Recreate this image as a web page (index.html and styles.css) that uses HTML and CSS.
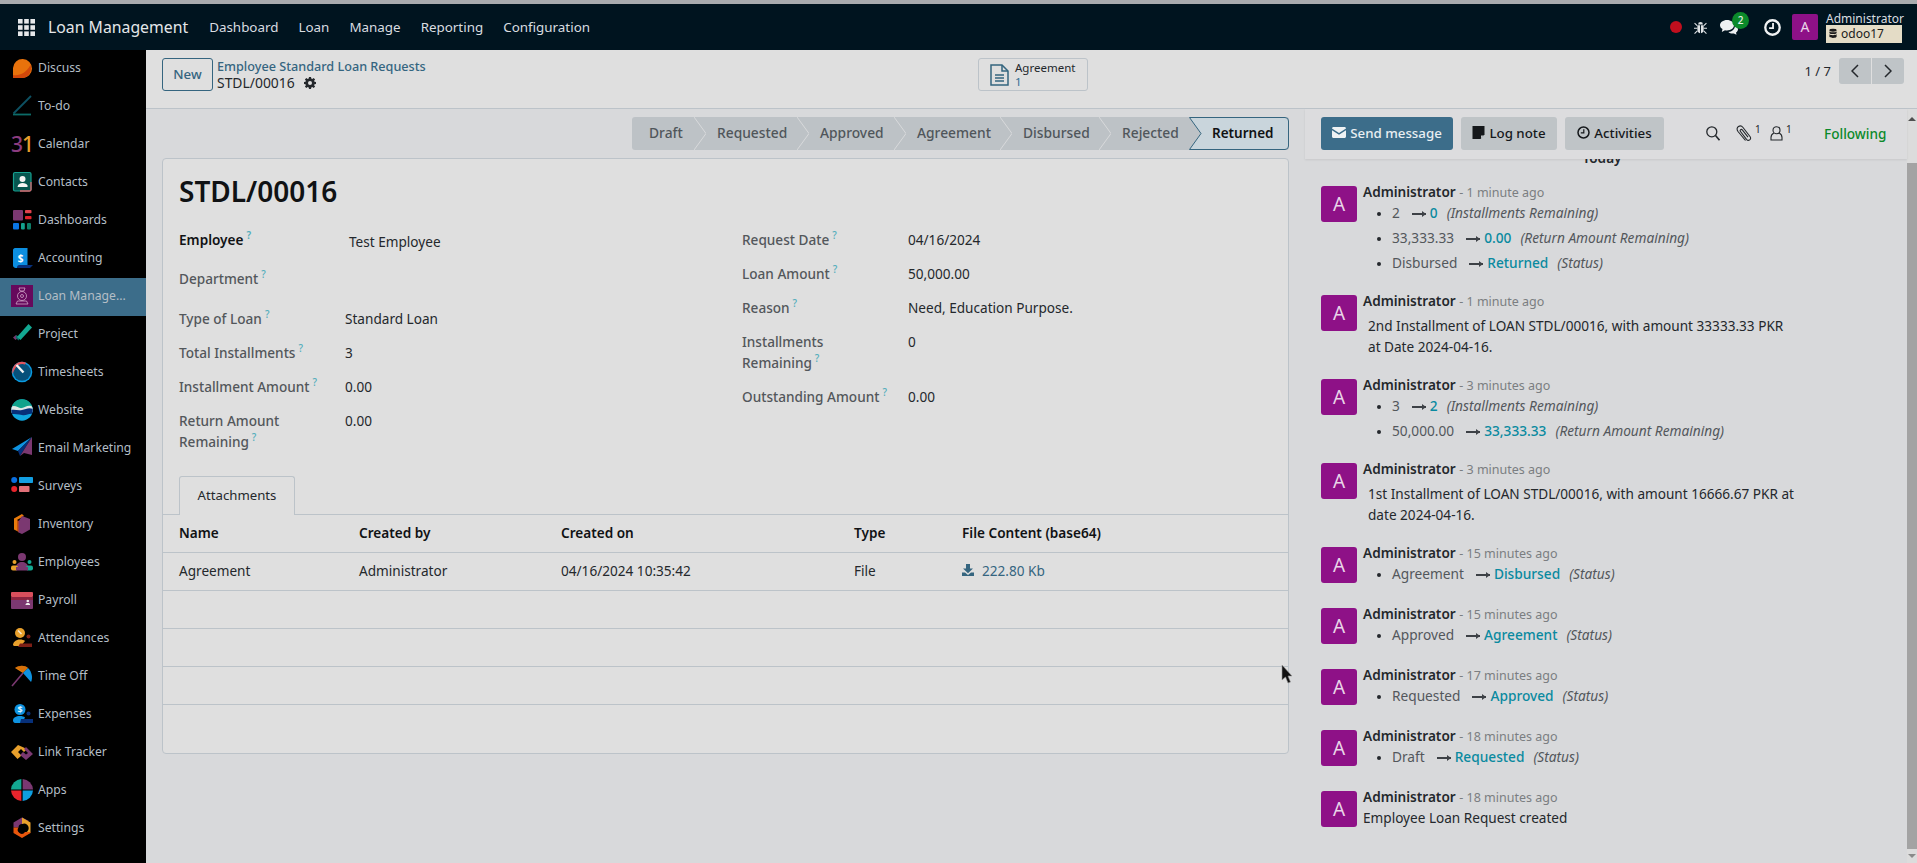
FILE: index.html
```html
<!DOCTYPE html>
<html lang="en">
<head>
    <meta charset="UTF-8">
    <title>STDL/00016 - Loan Management</title>
    <link rel="stylesheet" href="styles.css">
</head>
<body>
    <!-- top navbar -->
    <header class="navbar">
        <svg class="grid-icon" viewBox="0 0 17 17" fill="#e6e8ea">
            <rect width="4.6" height="4.6"/><rect x="6.2" width="4.6" height="4.6"/><rect x="12.4" width="4.6" height="4.6"/>
            <rect y="6.2" width="4.6" height="4.6"/><rect x="6.2" y="6.2" width="4.6" height="4.6"/><rect x="12.4" y="6.2" width="4.6" height="4.6"/>
            <rect y="12.4" width="4.6" height="4.6"/><rect x="6.2" y="12.4" width="4.6" height="4.6"/><rect x="12.4" y="12.4" width="4.6" height="4.6"/>
        </svg>
        <span class="brand">Loan Management</span>
        <nav class="menu">
            <a>Dashboard</a>
            <a>Loan</a>
            <a>Manage</a>
            <a>Reporting</a>
            <a>Configuration</a>
        </nav>
        <div class="systray">
            <span class="rec-dot"></span>
            <svg class="tray-bug" viewBox="0 0 14 15" fill="#dfe3e6">
                <path d="M4.4 4.2a2.6 2.6 0 0 1 5.2 0z"/>
                <path d="M3.6 5h2.9v8.6A3.6 3.6 0 0 1 3.6 10zM7.5 5h2.9v5a3.6 3.6 0 0 1-2.9 3.6z"/>
                <path d="M.6 2.8 3.4 5.4 M13.4 2.8 10.6 5.4 M0 8.3h3.6 M14 8.3h-3.6 M.6 14l3-2.8 M13.4 14l-3-2.8" stroke="#dfe3e6" stroke-width="1.2" fill="none"/>
            </svg>
            <span class="tray-chat">
                <svg viewBox="0 0 18 15" fill="#eef0f2">
                    <path d="M7 0c3.9 0 7 2.3 7 5.2s-3.1 5.2-7 5.2c-.7 0-1.4-.1-2-.2L1.800 12l.7-2.900C.9 8.100 0 6.700 0 5.200 0 2.300 3.100 0 7 0z"/>
                    <path d="M15 5.500c1.800.8 3 2.200 3 3.800 0 1.300-.8 2.500-2 3.300l.5 2.200-2.600-1.400c-2.200.3-4.300-.3-5.500-1.500 3.600-.1 6.700-2.700 6.600-6.400z"/>
                </svg>
                <b class="tray-badge">2</b>
            </span>
            <svg class="tray-clock" viewBox="0 0 16 16" fill="none" stroke="#f0f2f3" stroke-width="2.200">
                <circle cx="8" cy="8" r="6.800"/><path d="M8.500 3.800V8.500H4.800" stroke-width="1.700"/>
            </svg>
            <span class="user-avatar">A</span>
            <div class="user-block">
                <span class="user-name">Administrator</span>
                <span class="db-badge">
                    <svg viewBox="0 0 10 12" fill="#1b1b1b"><ellipse cx="5" cy="2" rx="4.500" ry="1.800"/><path d="M.5 3.500c1 1.400 8 1.400 9 0V5.600c-1 1.400-8 1.400-9 0zM.5 7c1 1.400 8 1.400 9 0v3c-1 2-8 2-9 0z"/></svg>
                    odoo17
                </span>
            </div>
        </div>
    </header>

    <div class="layout">
        <!-- apps sidebar -->
        <aside class="sidebar">
            <a class="app">
                <svg viewBox="0 0 22 22"><path fill="#e8720c" d="M2 21V11a9.500 9.500 0 1 1 9.500 10z"/><path fill="#d2480a" d="M2 21v-3c7 1 13-2 17.500-10 2 6-2 13-8 13z"/></svg>
                <span>Discuss</span>
            </a>
            <a class="app">
                <svg viewBox="0 0 22 22" fill="none" stroke-width="1.800"><path stroke="#0d5163" d="M20 1 2.500 18.500"/><path stroke="#0c6b68" d="M2 19.500h18"/></svg>
                <span>To-do</span>
            </a>
            <a class="app">
                <span class="app-cal"><i class="cal-three">3</i><i class="cal-one">1</i></span>
                <span>Calendar</span>
            </a>
            <a class="app">
                <svg viewBox="0 0 22 22"><rect x="2.500" y="1.500" width="17.500" height="18.500" rx="1.500" fill="#06554f" stroke="#17a08f" stroke-width="1.200"/><path d="M20 11v7.500a1.500 1.500 0 0 1-1.500 1.500H9" fill="none" stroke="#d9626a" stroke-width="1.300"/><circle cx="11.500" cy="8" r="3" fill="#f4f4f4"/><path d="M6.500 16c.5-3 2.500-4 5-4s4.500 1 5 2.500v1.500z" fill="#f4f4f4"/></svg>
                <span>Contacts</span>
            </a>
            <a class="app">
                <svg viewBox="0 0 22 22"><rect x="2" y="1" width="10" height="10.500" rx="1" fill="#7b3871"/><rect x="14" y="1" width="6.500" height="3.300" rx=".8" fill="#e0424e"/><rect x="14" y="7" width="6.500" height="3.300" rx=".8" fill="#e0242c"/><rect x="2" y="14" width="6" height="6.500" rx="1" fill="#0a75e4"/><rect x="10" y="14" width="3.800" height="6.500" rx="1" fill="#13a08d"/><rect x="16" y="14" width="4" height="6.500" rx="1" fill="#0d7d68"/></svg>
                <span>Dashboards</span>
            </a>
            <a class="app">
                <svg viewBox="0 0 22 22"><path fill="#07307a" d="M6 18h16l-3 3H6z"/><path fill="#0c8ee0" d="M4 1h12.500v17H8c-2 0-2 3-2 3-2 0-4-.5-4-2.500V3c0-1 1-2 2-2z"/><text class="acc-dollar" x="9.500" y="14.500" text-anchor="middle">$</text></svg>
                <span>Accounting</span>
            </a>
            <a class="app app-active">
                <svg viewBox="0 0 22 22"><rect width="22" height="22" fill="#66095c"/><g fill="none" stroke="#cfa6c8" stroke-width=".8"><path d="M8 3h6l-1 3h-4z"/><circle cx="11" cy="11" r="4.500"/><circle cx="11" cy="11" r="1.500"/><path d="M6.500 16h9l1.500 3H5z"/></g></svg>
                <span>Loan Manage...</span>
            </a>
            <a class="app">
                <svg viewBox="0 0 22 22"><path fill="#7b3871" d="M2 14.500l3-2.500 2.500 2.500-3 2.500z"/><path fill="#0c6b68" d="M5.500 12 9 15l-1.500 2.500-3-3z"/><path fill="#13a892" d="M17.500 1 21 4.500 9.500 17l-3.500-3z"/></svg>
                <span>Project</span>
            </a>
            <a class="app">
                <svg viewBox="0 0 22 22"><circle cx="11" cy="11" r="10.300" fill="#0a9ae0"/><circle cx="11" cy="11" r="8.800" fill="#07507a"/><path d="M1.500 13A10 10 0 0 1 11 .7 10 10 0 0 1 15 1.800L14 3.500A8.800 8.800 0 0 0 3 9.500z" fill="#e0545c"/><path d="M5.500 4 12.500 11.500" stroke="#f4f4f4" stroke-width="2.400"/></svg>
                <span>Timesheets</span>
            </a>
            <a class="app">
                <svg viewBox="0 0 22 22"><defs><clipPath id="webClip"><circle cx="11" cy="11" r="10.700"/></clipPath></defs><g clip-path="url(#webClip)"><rect width="22" height="22" fill="#10a6e0"/><rect width="22" height="9" fill="#10a38c"/><path d="M0 8c4-3 8 2 11 1s7-4 11-1v5c-4-2-7 1-11 1s-7-2-11 0z" fill="#dfe8e6"/><path d="M0 11c4-1 7 1 11 0s7-3 11-1v5c-4-1-7 2-11 1S4 15 0 15z" fill="#07307a"/></g></svg>
                <span>Website</span>
            </a>
            <a class="app">
                <svg viewBox="0 0 22 22"><path fill="#0e92e0" d="M21 0 1 12l6 2z"/><path fill="#07307a" d="M21 0 7 14l2 5z"/><path fill="#7b3871" d="M21 0v18l-8-2-4 3z"/></svg>
                <span>Email Marketing</span>
            </a>
            <a class="app">
                <svg viewBox="0 0 22 22"><circle cx="3.200" cy="5" r="3" fill="#0a6fe0"/><circle cx="3.200" cy="14" r="3" fill="#e8242c"/><rect x="8" y="2" width="14" height="6" rx=".8" fill="#129fe2"/><rect x="8" y="11" width="10.500" height="6" rx=".8" fill="#e07078"/></svg>
                <span>Surveys</span>
            </a>
            <a class="app">
                <svg viewBox="0 0 22 22"><path fill="#e87b0c" d="M11 1 3 5.500v11L6 18V7l7-4z"/><path fill="#c94e0a" d="M6 7v11l2 1.500V8z"/><path fill="#7b3871" d="M19 6 11 3 7.500 8.500v11L11 21l8-4.500z"/></svg>
                <span>Inventory</span>
            </a>
            <a class="app">
                <svg viewBox="0 0 22 22"><circle cx="11" cy="6" r="4" fill="#7b3871"/><path d="M5 16c0-3 3-5 6-5s6 2 6 5z" fill="#7b3871"/><circle cx="3.500" cy="11" r="2" fill="#e8a02c"/><circle cx="18.500" cy="11" r="2" fill="#13a892"/><rect y="14.500" width="7" height="5" rx="2" fill="#e8a02c"/><rect x="15" y="14.500" width="7" height="5" rx="2" fill="#13a892"/><rect x="5" y="16" width="12" height="3.500" fill="#7b3871"/></svg>
                <span>Employees</span>
            </a>
            <a class="app">
                <svg viewBox="0 0 22 22"><rect y="3" width="22" height="5" rx="1" fill="#d94f5c"/><rect y="8" width="22" height="3" fill="#8c2440"/><path d="M0 11h22v8a1 1 0 0 1-1 1H1a1 1 0 0 1-1-1z" fill="#7b3871"/><circle cx="16.800" cy="12" r="1.300" fill="#eee"/><path d="M14.500 16c0-1.500 1-2 2.300-2s2.300.5 2.300 2z" fill="#eee"/></svg>
                <span>Payroll</span>
            </a>
            <a class="app">
                <svg viewBox="0 0 22 22"><circle cx="9" cy="6" r="5" fill="#e8a02c"/><path d="M7 3.500l3.500 3.500" stroke="#f6e7d0" stroke-width="1.600"/><path d="M2 18c0-3 3-5.500 7-5.500 2 0 4 .5 5 1.500l-4 5H4c-1 0-2-.5-2-1z" fill="#e8a02c"/><circle cx="17.500" cy="9.500" r="2" fill="#7c1f16"/><path d="M9 16.500h12V20H7z" fill="#7c1f16"/></svg>
                <span>Attendances</span>
            </a>
            <a class="app">
                <svg viewBox="0 0 22 22"><path d="M1 21 12 8" stroke="#7b3871" stroke-width="1.600"/><path fill="#e8820c" d="M4 3c4-3 10-3 13 0l-5 5z"/><path fill="#b8570a" d="M4 3c2 0 5 1 8 5L17 3c-4-3-9-3-13 0z" opacity=".4"/><path fill="#0e92e0" d="M17 3c4 4 5 10 3 14L12 8z"/></svg>
                <span>Time Off</span>
            </a>
            <a class="app">
                <svg viewBox="0 0 22 22"><circle cx="9" cy="6.500" r="5.500" fill="#0e92e0"/><text class="exp-dollar" x="9" y="9.500" text-anchor="middle">$</text><path d="M2 17.500c0-3 3-4.500 7-4.500 2 0 4 .5 5 1.500l-3 5.500H4c-1 0-2-1-2-2.500z" fill="#0e92e0"/><circle cx="17.500" cy="10.500" r="2" fill="#07307a"/><path d="M10 16h12v4H9z" fill="#07307a"/></svg>
                <span>Expenses</span>
            </a>
            <a class="app">
                <svg viewBox="0 0 22 22"><path fill="#e8a02c" d="M7 4 0 11l6.500 7 4-3.500-3.500-3.500 3-3 3 3 3-3z"/><path fill="#7b3871" d="M15 6l7 7-7 6-6-5 3-3 3 2.500 2-1.500-4-4z"/></svg>
                <span>Link Tracker</span>
            </a>
            <a class="app">
                <svg viewBox="0 0 22 22"><path fill="#13a892" d="M10.400 0A11 11 0 0 0 0 10.400h10.400z"/><path fill="#7b3871" d="M11.600 0A11 11 0 0 1 22 10.400H11.600z"/><path fill="#e8242c" d="M0 11.600A11 11 0 0 0 10.400 22V11.600z"/><path fill="#0e9ee0" d="M22 11.600A11 11 0 0 1 11.600 22V11.600z"/></svg>
                <span>Apps</span>
            </a>
            <a class="app">
                <svg viewBox="0 0 22 22"><path fill="#7b3871" d="M11 .5 2.500 5.500v5h5a3.500 3.500 0 0 1 3.500-3.500l7-3z"/><path fill="#e8a02c" d="M19.500 5.500v10l-4.500 0a4 4 0 0 0-4-8.500l0-6.500z"/><path fill="#e8560c" d="M2.500 10.500v5.500l8.500 5 8.500-5v-1H14a3.500 3.500 0 0 1-6.500-4.500z"/></svg>
                <span>Settings</span>
            </a>
        </aside>

        <main class="main">
            <!-- control panel -->
            <div class="control-panel">
                <button class="btn-new">New</button>
                <div class="breadcrumb">
                    <a class="crumb-link">Employee Standard Loan Requests</a>
                    <div class="crumb-current">
                        STDL/00016
                        <svg class="gear" viewBox="0 0 12 12" fill="#24282c"><path fill-rule="evenodd" d="M5 0h2l.3 1.600 1 .4L9.700 1l1.400 1.400-1 1.400.4 1 1.500.2v2l-1.500.3-.4 1 1 1.300-1.400 1.400-1.400-1-1 .4L7 12H5l-.3-1.600-1-.4L2.300 11 .9 9.600l1-1.300-.4-1L0 7V5l1.500-.2.400-1-1-1.400L2.300 1l1.400 1 1-.4zM6 4a2 2 0 1 0 0 4 2 2 0 0 0 0-4z"/></svg>
                    </div>
                </div>
                <a class="stat-btn">
                    <svg viewBox="0 0 19 22" fill="none" stroke="#35657f" stroke-width="1.500">
                        <path d="M1 1h11l6 6v14H1z"/><path d="M12 1v6h6M5 11h9M5 14h9M5 17h9"/>
                    </svg>
                    <span class="stat-text">Agreement<b>1</b></span>
                </a>
                <div class="pager">
                    <span class="pager-count">1 / 7</span>
                    <div class="pager-btns">
                        <button><svg viewBox="0 0 8 14" fill="none" stroke="#24282c" stroke-width="1.500"><path d="M7 1 1 7l6 6"/></svg></button>
                        <button><svg viewBox="0 0 8 14" fill="none" stroke="#24282c" stroke-width="1.500"><path d="M1 1l6 6-6 6"/></svg></button>
                    </div>
                </div>
            </div>

            <div class="content">
                <!-- form -->
                <section class="form-col">
                    <div class="statusbar">
                        <div class="step step-first">Draft<svg class="chev" viewBox="0 0 12 33"><path d="M0 0 12 16.500 0 33"/></svg></div>
                        <div class="step">Requested<svg class="chev" viewBox="0 0 12 33"><path d="M0 0 12 16.500 0 33"/></svg></div>
                        <div class="step">Approved<svg class="chev" viewBox="0 0 12 33"><path d="M0 0 12 16.500 0 33"/></svg></div>
                        <div class="step">Agreement<svg class="chev" viewBox="0 0 12 33"><path d="M0 0 12 16.500 0 33"/></svg></div>
                        <div class="step">Disbursed<svg class="chev" viewBox="0 0 12 33"><path d="M0 0 12 16.500 0 33"/></svg></div>
                        <div class="step">Rejected</div>
                        <div class="step step-current">
                            <svg class="step-bg" viewBox="0 0 100 33"><path d="M.5.500H96a3.500 3.500 0 0 1 3.500 3.500V29a3.500 3.500 0 0 1-3.500 3.500H.5L12 16.500z"/></svg>
                            <span>Returned</span>
                        </div>
                    </div>

                    <div class="sheet">
                        <h1 class="sheet-title">STDL/00016</h1>
                        <div class="groups">
                            <div class="group">
                                <div class="field field-first"><div class="field-label label-strong">Employee<sup>?</sup></div><div class="field-value value-indent">Test Employee</div></div>
                                <div class="field field-dept"><div class="field-label">Department<sup>?</sup></div><div class="field-value"></div></div>
                                <div class="field"><div class="field-label">Type of Loan<sup>?</sup></div><div class="field-value">Standard Loan</div></div>
                                <div class="field"><div class="field-label">Total Installments<sup>?</sup></div><div class="field-value">3</div></div>
                                <div class="field"><div class="field-label">Installment Amount<sup>?</sup></div><div class="field-value">0.00</div></div>
                                <div class="field"><div class="field-label">Return Amount<br>Remaining<sup>?</sup></div><div class="field-value">0.00</div></div>
                            </div>
                            <div class="group">
                                <div class="field"><div class="field-label">Request Date<sup>?</sup></div><div class="field-value">04/16/2024</div></div>
                                <div class="field"><div class="field-label">Loan Amount<sup>?</sup></div><div class="field-value">50,000.00</div></div>
                                <div class="field"><div class="field-label">Reason<sup>?</sup></div><div class="field-value">Need, Education Purpose.</div></div>
                                <div class="field"><div class="field-label">Installments<br>Remaining<sup>?</sup></div><div class="field-value">0</div></div>
                                <div class="field"><div class="field-label">Outstanding Amount<sup>?</sup></div><div class="field-value">0.00</div></div>
                            </div>
                        </div>

                        <div class="tabs"><a class="tab">Attachments</a></div>
                        <table class="attach-table">
                            <thead>
                                <tr><th class="col-name">Name</th><th class="col-by">Created by</th><th class="col-on">Created on</th><th class="col-type">Type</th><th>File Content (base64)</th></tr>
                            </thead>
                            <tbody>
                                <tr>
                                    <td>Agreement</td><td>Administrator</td><td>04/16/2024 10:35:42</td><td>File</td>
                                    <td><a class="file-link"><svg viewBox="0 0 12 12" fill="#35657f"><path d="M4 0h4v4.500h3L6 9.200 1 4.500h3z"/><path d="M0 8.500h3L6 11l3-2.500h3V12H0z"/></svg>222.80 Kb</a></td>
                                </tr>
                                <tr><td colspan="5"></td></tr>
                                <tr><td colspan="5"></td></tr>
                                <tr><td colspan="5"></td></tr>
                                <tr class="row-last"><td colspan="5"></td></tr>
                            </tbody>
                        </table>
                    </div>
                </section>

                <!-- chatter -->
                <section class="chatter">
                    <div class="chatter-scroll">
                        <div class="chatter-bar">
                            <button class="chat-btn chat-btn-primary">
                                <svg viewBox="0 0 14 11" fill="#eef2f4"><path d="M0 1.500C0 .7.700 0 1.500 0h11c.8 0 1.500.7 1.500 1.500L7 6zM0 3.200 7 7.800l7-4.600v6.300c0 .8-.7 1.500-1.500 1.500h-11C.7 11 0 10.300 0 9.500z"/></svg>
                                Send message
                            </button>
                            <button class="chat-btn">
                                <svg viewBox="0 0 12 13" fill="#15181b"><path d="M0 0h12v8.500L8 13H0z"/><path d="M8.500 9.500h3l-3 3z" fill="#bfc4c7"/></svg>
                                Log note
                            </button>
                            <button class="chat-btn">
                                <svg viewBox="0 0 13 13" fill="none" stroke="#15181b" stroke-width="1.500"><circle cx="6.500" cy="6.500" r="5.500"/><path d="M6.800 3.200v3.600H3.800" stroke-width="1.200"/></svg>
                                Activities
                            </button>
                            <div class="chat-tools">
                                <svg class="tool-search" viewBox="0 0 14 15" fill="none" stroke="#24282c" stroke-width="1.300"><circle cx="5.800" cy="5.800" r="5"/><path d="M9.500 9.500 13.500 14.200" stroke-width="1.600"/></svg>
                                <svg class="tool-clip" viewBox="0 0 16 17" fill="none" stroke="#24282c" stroke-width="1.100"><path d="M9.500 15.500 2 6.500C.5 4.500 1 2.500 2.500 1.500s3.300-.6 4.500 1l7 9c1 1.400.7 2.700-.3 3.400s-2.300.5-3.200-.6L4.500 6.500c-.6-.8-.4-1.500.2-1.900s1.200-.2 1.800.5l5.500 7"/></svg>
                                <sup class="tool-count">1</sup>
                                <svg class="tool-user" viewBox="0 0 13 15" fill="none" stroke="#24282c" stroke-width="1.100"><circle cx="6.500" cy="4.200" r="3.500"/><path d="M3.800 7C2 8 1 9.500 1 11.500V14h11v-2.500C12 9.500 11 8 9.200 7"/></svg>
                                <sup class="tool-count">1</sup>
                            </div>
                            <span class="following">Following</span>
                        </div>

                        <div class="today">Today</div>

                        <div class="msg">
                            <span class="msg-avatar">A</span>
                            <div class="msg-body">
                                <div class="msg-head"><b>Administrator</b> <span>- 1 minute ago</span></div>
                                <ul class="changes">
                                    <li><span class="old">2</span><i class="arrow"></i><span class="new">0</span><em>(Installments Remaining)</em></li>
                                    <li><span class="old">33,333.33</span><i class="arrow"></i><span class="new">0.00</span><em>(Return Amount Remaining)</em></li>
                                    <li><span class="old">Disbursed</span><i class="arrow"></i><span class="new">Returned</span><em>(Status)</em></li>
                                </ul>
                            </div>
                        </div>
                        <div class="msg">
                            <span class="msg-avatar">A</span>
                            <div class="msg-body">
                                <div class="msg-head"><b>Administrator</b> <span>- 1 minute ago</span></div>
                                <p class="msg-note">2nd Installment of LOAN STDL/00016, with amount 33333.33 PKR<br>at Date 2024-04-16.</p>
                            </div>
                        </div>
                        <div class="msg">
                            <span class="msg-avatar">A</span>
                            <div class="msg-body">
                                <div class="msg-head"><b>Administrator</b> <span>- 3 minutes ago</span></div>
                                <ul class="changes">
                                    <li><span class="old">3</span><i class="arrow"></i><span class="new">2</span><em>(Installments Remaining)</em></li>
                                    <li><span class="old">50,000.00</span><i class="arrow"></i><span class="new">33,333.33</span><em>(Return Amount Remaining)</em></li>
                                </ul>
                            </div>
                        </div>
                        <div class="msg">
                            <span class="msg-avatar">A</span>
                            <div class="msg-body">
                                <div class="msg-head"><b>Administrator</b> <span>- 3 minutes ago</span></div>
                                <p class="msg-note">1st Installment of LOAN STDL/00016, with amount 16666.67 PKR at<br>date 2024-04-16.</p>
                            </div>
                        </div>
                        <div class="msg">
                            <span class="msg-avatar">A</span>
                            <div class="msg-body">
                                <div class="msg-head"><b>Administrator</b> <span>- 15 minutes ago</span></div>
                                <ul class="changes">
                                    <li><span class="old">Agreement</span><i class="arrow"></i><span class="new">Disbursed</span><em>(Status)</em></li>
                                </ul>
                            </div>
                        </div>
                        <div class="msg">
                            <span class="msg-avatar">A</span>
                            <div class="msg-body">
                                <div class="msg-head"><b>Administrator</b> <span>- 15 minutes ago</span></div>
                                <ul class="changes">
                                    <li><span class="old">Approved</span><i class="arrow"></i><span class="new">Agreement</span><em>(Status)</em></li>
                                </ul>
                            </div>
                        </div>
                        <div class="msg">
                            <span class="msg-avatar">A</span>
                            <div class="msg-body">
                                <div class="msg-head"><b>Administrator</b> <span>- 17 minutes ago</span></div>
                                <ul class="changes">
                                    <li><span class="old">Requested</span><i class="arrow"></i><span class="new">Approved</span><em>(Status)</em></li>
                                </ul>
                            </div>
                        </div>
                        <div class="msg">
                            <span class="msg-avatar">A</span>
                            <div class="msg-body">
                                <div class="msg-head"><b>Administrator</b> <span>- 18 minutes ago</span></div>
                                <ul class="changes">
                                    <li><span class="old">Draft</span><i class="arrow"></i><span class="new">Requested</span><em>(Status)</em></li>
                                </ul>
                            </div>
                        </div>
                        <div class="msg">
                            <span class="msg-avatar">A</span>
                            <div class="msg-body">
                                <div class="msg-head"><b>Administrator</b> <span>- 18 minutes ago</span></div>
                                <div class="msg-plain">Employee Loan Request created</div>
                            </div>
                        </div>
                    </div>
                    <div class="scrollbar">
                        <span class="scroll-up"></span>
                        <span class="scroll-thumb"></span>
                        <span class="scroll-down"></span>
                    </div>
                </section>
            </div>
        </main>
    </div>

    <!-- mouse pointer caught in the screenshot -->
    <svg class="cursor" viewBox="0 0 12 19"><path d="M1 0v15l3.500-3 2.500 6 2.500-1-2.500-6H11z" fill="#111" stroke="#999" stroke-width=".6"/></svg>
</body>
</html>
```

FILE: styles.css
```css
* {
    box-sizing: border-box;
}
html, body {
    height: 100%;
}
body {
    margin: 0;
    overflow: hidden;
    display: flex;
    flex-direction: column;
    border-top: 4px solid #a9abae;
    background-color: #d8d9db;
    color: #24282c;
    font-family: "Noto Sans", sans-serif;
    font-size: 13.6px;
    line-height: 21px;
}
button {
    font-family: inherit;
    cursor: pointer;
}
a {
    cursor: pointer;
}

/* navbar */
.navbar {
    flex: none;
    height: 46px;
    display: flex;
    align-items: center;
    padding-left: 18px;
    background-color: #00141f;
    color: #d9dde0;
}
.grid-icon {
    width: 17px;
    height: 17px;
}
.brand {
    margin-left: 13px;
    font-size: 15.8px;
    color: #e4e7e9;
}
.menu {
    display: flex;
    margin-left: 21px;
    gap: 20px;
    font-size: 13.4px;
}
.systray {
    margin-left: auto;
    display: flex;
    align-items: center;
    padding-right: 15px;
}
.rec-dot {
    width: 12px;
    height: 12px;
    margin-right: 12px;
    border-radius: 50%;
    background-color: #c00f1e;
}
.tray-bug {
    width: 13px;
    height: 15px;
    margin-right: 13px;
}
.tray-chat {
    position: relative;
    width: 18px;
    height: 15px;
    margin-right: 26px;
}
.tray-chat svg {
    display: block;
    width: 18px;
    height: 15px;
}
.tray-badge {
    position: absolute;
    left: 12px;
    top: -8px;
    width: 17px;
    height: 17px;
    border-radius: 50%;
    background-color: #0b8a2a;
    color: #e8f0ea;
    font-size: 10px;
    font-weight: 500;
    line-height: 17px;
    text-align: center;
}
.tray-clock {
    width: 17px;
    height: 17px;
    margin-right: 11px;
}
.user-avatar {
    width: 26px;
    height: 26px;
    border-radius: 2px;
    background-color: #8e1187;
    color: #e9d5e8;
    font-size: 14px;
    line-height: 26px;
    text-align: center;
}
.user-block {
    width: 76px;
    margin-left: 8px;
    display: flex;
    flex-direction: column;
}
.user-name {
    font-size: 12px;
    line-height: 13px;
    white-space: nowrap;
}
.db-badge {
    height: 18px;
    display: flex;
    align-items: center;
    gap: 4px;
    padding-left: 3px;
    background-color: #e4dcc6;
    color: #1b1b1b;
    font-size: 12px;
    line-height: 18px;
}
.db-badge svg {
    width: 8px;
    height: 11px;
}

/* layout */
.layout {
    flex: 1;
    min-height: 0;
    display: flex;
}
.sidebar {
    flex: none;
    width: 146px;
    background-color: #000;
}
.app {
    height: 38px;
    display: flex;
    align-items: center;
    gap: 5px;
    padding-left: 11px;
    padding-bottom: 3px;
    color: #b4bec6;
    font-size: 12.200px;
    white-space: nowrap;
}
.app svg {
    flex: none;
    width: 22px;
    height: 22px;
}
.app-active {
    background-color: #3c6d8a;
}
.app-cal {
    flex: none;
    width: 22px;
    font-size: 21px;
    font-weight: 500;
    line-height: 22px;
    letter-spacing: -1px;
}
.app-cal i {
    font-style: normal;
}
.cal-three {
    color: #8c3c80;
}
.cal-one {
    color: #e8a02c;
}
.acc-dollar {
    font-size: 10px;
    font-weight: 700;
    fill: #fff;
}
.exp-dollar {
    font-size: 9px;
    font-weight: 700;
    fill: #dff1fb;
}
.main {
    flex: 1;
    min-width: 0;
    display: flex;
    flex-direction: column;
}

/* control panel */
.control-panel {
    flex: none;
    position: relative;
    height: 59px;
    display: flex;
    align-items: flex-start;
    padding: 8px 13px 0 16px;
    background-color: #dfdfdf;
    border-bottom: 1px solid #bcc3c9;
}
.btn-new {
    width: 51px;
    height: 33px;
    padding: 0 0 2px;
    border: 1px solid #35657f;
    border-radius: 3px;
    background: transparent;
    color: #35657f;
    font-size: 13.3px;
    font-weight: 500;
}
.breadcrumb {
    margin-left: 4px;
    line-height: 17px;
}
.crumb-link {
    display: block;
    color: #35657f;
    font-size: 12.650px;
    font-weight: 500;
    line-height: 17px;
    white-space: nowrap;
}
.crumb-current {
    display: flex;
    align-items: center;
    gap: 9px;
    font-size: 13.900px;
    line-height: 16px;
}
.gear {
    width: 12px;
    height: 12px;
}
.stat-btn {
    position: absolute;
    left: 832px;
    top: 8px;
    width: 110px;
    height: 33px;
    display: flex;
    align-items: center;
    gap: 6px;
    padding-left: 11px;
    border: 1px solid #bcc3c9;
    border-radius: 3px;
}
.stat-btn svg {
    width: 19px;
    height: 22px;
}
.stat-text {
    font-size: 11.500px;
    line-height: 14px;
}
.stat-text b {
    display: block;
    color: #2f6d94;
    font-weight: 400;
}
.pager {
    margin-left: auto;
    display: flex;
    align-items: center;
    gap: 8px;
}
.pager-count {
    font-size: 13px;
}
.pager-btns {
    display: flex;
    gap: 1px;
}
.pager-btns button {
    width: 32px;
    height: 26px;
    display: flex;
    align-items: center;
    justify-content: center;
    padding: 0;
    border: none;
    background-color: #bfc4c7;
}
.pager-btns button:first-child {
    border-radius: 3px 0 0 3px;
}
.pager-btns button:last-child {
    border-radius: 0 3px 3px 0;
}
.pager-btns svg {
    width: 8px;
    height: 14px;
}

/* form */
.content {
    flex: 1;
    min-height: 0;
    display: flex;
}
.form-col {
    flex: none;
    width: 1159px;
    padding: 8px 16px 0;
}
.statusbar {
    width: 657px;
    height: 33px;
    margin-left: auto;
    display: grid;
    grid-template-columns: 62px 103px 97px 106px 99px 90px 100px;
    border-radius: 3px;
    background-color: #bdc2c6;
    color: #50565b;
    font-size: 13.8px;
    font-weight: 500;
    line-height: 32px;
}
.step {
    position: relative;
    padding-left: 23px;
    white-space: nowrap;
}
.step-first {
    padding-left: 17px;
}
.chev {
    position: absolute;
    left: 100%;
    top: 0;
    width: 12px;
    height: 33px;
    fill: none;
    stroke: #d8d9db;
    stroke-width: 1;
}
.step-current {
    color: #101214;
    font-weight: 600;
    font-size: 13.5px;
}
.step-current span {
    position: relative;
}
.step-bg {
    position: absolute;
    left: 0;
    top: 0;
    width: 100px;
    height: 33px;
    fill: #c9d5dc;
    stroke: #35657f;
    stroke-width: 1;
}
.sheet {
    height: 596px;
    margin-top: 8px;
    border: 1px solid #bcc3c9;
    border-radius: 4px;
    background-color: #dfdfdf;
    overflow: hidden;
}
.sheet-title {
    margin: 13px 16px 19px;
    color: #101214;
    font-size: 28px;
    font-weight: 600;
    line-height: 38px;
}
.groups {
    display: grid;
    grid-template-columns: 563px 1fr;
    height: 236px;
    padding-left: 16px;
}
.field {
    display: grid;
    grid-template-columns: 166px 1fr;
    padding-bottom: 13px;
}
.field-first {
    padding-bottom: 16px;
}
.field-dept {
    height: 40px;
}
.field-label {
    color: #53575b;
    font-weight: 500;
}
.field-label sup {
    margin-left: 3px;
    color: #54aebc;
    font-size: 10px;
    line-height: 0;
}
.label-strong {
    color: #101214;
    font-weight: 600;
}
.value-indent {
    padding-left: 4px;
    padding-top: 2px;
}
.tabs {
    height: 39px;
    margin-top: 11px;
    padding-left: 16px;
    border-bottom: 1px solid #bcc3c9;
}
.tab {
    display: block;
    width: 116px;
    height: 39px;
    border: 1px solid #bcc3c9;
    border-bottom: none;
    border-radius: 3px 3px 0 0;
    background-color: #dfdfdf;
    font-size: 13.2px;
    line-height: 37px;
    text-align: center;
}
.attach-table {
    width: 100%;
    border-collapse: collapse;
    table-layout: fixed;
}
.attach-table th, .attach-table td {
    height: 38px;
    padding: 0 0 2px;
    border-bottom: 1px solid #bcc3c9;
    text-align: left;
}
.attach-table th {
    height: 37px;
    color: #101214;
    font-weight: 600;
}
.attach-table th:first-child, .attach-table td:first-child {
    padding-left: 16px;
}
.attach-table .row-last td {
    height: 48px;
    border-bottom: none;
}
.col-name {
    width: 196px;
}
.col-by {
    width: 202px;
}
.col-on {
    width: 293px;
}
.col-type {
    width: 108px;
}
.file-link {
    display: flex;
    align-items: center;
    gap: 8px;
    color: #35657f;
}
.file-link svg {
    width: 12px;
    height: 12px;
}

/* chatter */
.chatter {
    flex: 1;
    min-width: 0;
    display: flex;
}
.chatter-scroll {
    flex: 1;
    min-width: 0;
}
.chatter-bar {
    position: relative;
    z-index: 1;
    height: 50px;
    display: flex;
    align-items: center;
    padding-left: 16px;
    padding-bottom: 1px;
    background-color: #dcdcde;
    box-shadow: 0 1px 2px rgba(0, 0, 0, 0.08);
}
.chat-btn {
    height: 33px;
    display: flex;
    align-items: center;
    justify-content: center;
    gap: 4px;
    width: 96px;
    margin-right: 8px;
    padding: 0 0 2px;
    border: none;
    border-radius: 3px;
    background-color: #bfc4c7;
    color: #15181b;
    font-size: 13.3px;
    font-weight: 500;
}
.chat-btn svg {
    width: 13px;
    height: 13px;
}
.chat-btn:nth-child(3) {
    width: 99px;
}
.chat-btn-primary {
    width: 132px;
    background-color: #3c6d8a;
    color: #e9eff2;
}
.chat-btn-primary svg {
    width: 14px;
}
.chat-tools {
    display: flex;
    align-items: center;
    margin-left: 34px;
}
.tool-search {
    width: 14px;
    height: 15px;
    margin-right: 16px;
}
.tool-clip {
    width: 16px;
    height: 17px;
}
.tool-user {
    width: 13px;
    height: 15px;
    margin-left: 10px;
}
.tool-count {
    width: 5px;
    margin-left: 3px;
    margin-top: -10px;
    font-size: 10px;
    line-height: 12px;
}
.following {
    margin-left: 33px;
    color: #0b8a2a;
    font-weight: 500;
}
.today {
    height: 34px;
    margin-top: -12px;
    text-align: center;
    font-weight: 600;
    padding-right: 8px;
}
.msg {
    display: flex;
    margin-left: 16px;
    margin-bottom: 13px;
    min-height: 48px;
}
.msg-avatar {
    flex: none;
    width: 36px;
    height: 36px;
    margin-top: 5px;
    margin-right: 6px;
    border-radius: 3px;
    background-color: #8e1187;
    color: #e9d5e8;
    font-size: 19px;
    line-height: 36px;
    text-align: center;
}
.msg-head {
    height: 21px;
}
.msg-head b {
    font-weight: 600;
}
.msg-head span {
    color: #7b7e81;
    font-size: 12.500px;
}
.changes {
    margin: -2px 0 2px;
    padding: 0 0 0 29px;
    font-size: 13.7px;
}
.changes li {
    height: 25px;
    line-height: 25px;
    white-space: nowrap;
}
.changes li::marker {
    font-size: 11px;
}
.old {
    color: #53575b;
}
.arrow {
    display: inline-block;
    position: relative;
    width: 14px;
    height: 2px;
    margin: 0 4px 0 12px;
    vertical-align: middle;
    background-color: #3d4146;
}
.arrow::after {
    content: "";
    position: absolute;
    right: 0;
    top: -2px;
    border-left: 4px solid #3d4146;
    border-top: 3px solid transparent;
    border-bottom: 3px solid transparent;
}
.new {
    color: #0a8aa0;
    font-weight: 500;
}
.changes em {
    margin-left: 9px;
    color: #53575b;
}
.msg-note {
    margin: 4px 0 4px 5px;
}
.scrollbar {
    flex: none;
    width: 10px;
    display: flex;
    flex-direction: column;
    align-items: center;
    background-color: #dcdcdc;
}
.scroll-up {
    margin-top: 8px;
    border-left: 4px solid transparent;
    border-right: 4px solid transparent;
    border-bottom: 4px solid #505050;
}
.scroll-thumb {
    width: 10px;
    height: 686px;
    margin-top: 42px;
    background-color: #a3a3a3;
}
.scroll-down {
    margin-top: 5px;
    border-left: 4px solid transparent;
    border-right: 4px solid transparent;
    border-top: 4px solid #8a8a8a;
}
.cursor {
    position: absolute;
    left: 1281px;
    top: 665px;
    width: 12px;
    height: 19px;
}
```
